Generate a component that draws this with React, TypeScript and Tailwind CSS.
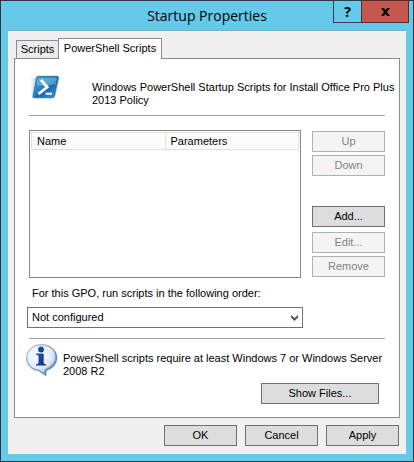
import type { ReactNode } from "react";

const buttonBase =
  "h-[21px] border border-[#707070] bg-[#dddddd] text-center text-black disabled:border-[#adb2b5] disabled:bg-[#f4f4f4] disabled:text-[#838383]";

function Button({ children, className = "w-[73px]", disabled = false }: { children: ReactNode; className?: string; disabled?: boolean }) {
  return (
    <button type="button" disabled={disabled} className={`${buttonBase} ${className}`}>
      {children}
    </button>
  );
}

function PowerShellIcon() {
  return (
    <svg width="32" height="26" viewBox="0 0 32 26" aria-hidden="true" className="shrink-0">
      <defs>
        <linearGradient id="ps" x1="0" y1="0" x2="1" y2="1">
          <stop offset="0" stopColor="#3f9bc6" />
          <stop offset="0.45" stopColor="#2a83bb" />
          <stop offset="0.55" stopColor="#1d62ab" />
          <stop offset="1" stopColor="#3aa0d4" />
        </linearGradient>
        <linearGradient id="trail" x1="0" x2="1">
          <stop offset="0" stopColor="#9ccbe6" stopOpacity="0" />
          <stop offset="1" stopColor="#7fb4d8" />
        </linearGradient>
      </defs>
      <path d="M1 4h8L7 21H2z" fill="url(#trail)" opacity="0.8" />
      <path d="M8.500 1.500H28.500Q31 1.500 30.300 4L26.300 22.500Q25.800 24.600 23.500 24.600H5Q2.600 24.600 3.100 22L6.600 3.600Q7 1.500 8.500 1.500Z" fill="#b5d2e6" />
      <path d="M9 2.500H28Q29.700 2.500 29.300 4L25.300 22Q24.800 23.600 23.300 23.600H5.400Q3.800 23.600 4.200 22L7.600 4Q8 2.500 9 2.500Z" fill="url(#ps)" stroke="#25729f" strokeWidth="0.8" />
      <path d="M9 4H28L26.500 10Q17 13 7.500 11Z" fill="#8fd0e9" opacity="0.45" />
      <path d="M12 6L18.200 13L9.500 20" fill="none" stroke="#fff" strokeWidth="2.8" />
      <path d="M16.500 19.700H23" stroke="#fff" strokeWidth="2" />
    </svg>
  );
}

function InfoIcon() {
  return (
    <svg width="32" height="33" viewBox="0 0 32 33" aria-hidden="true" className="shrink-0">
      <defs>
        <radialGradient id="bubble" cx="0.38" cy="0.3" r="0.75">
          <stop offset="0" stopColor="#ffffff" />
          <stop offset="0.6" stopColor="#e2edf9" />
          <stop offset="1" stopColor="#9dbde5" />
        </radialGradient>
        <linearGradient id="rim" x1="0" y1="0" x2="1" y2="1">
          <stop offset="0" stopColor="#c3ced9" />
          <stop offset="0.5" stopColor="#8fa6c2" />
          <stop offset="1" stopColor="#3d5f92" />
        </linearGradient>
        <linearGradient id="letter" x1="0" y1="0" x2="1" y2="1">
          <stop offset="0" stopColor="#2459c9" />
          <stop offset="1" stopColor="#082c80" />
        </linearGradient>
      </defs>
      <path d="M15.500 0.800C23.800 0.800 30.600 6.500 30.600 13.800C30.600 19.600 26.200 24.500 20 26.200L19.500 31L12.500 26.200C5.400 25.500 0.700 20.300 0.700 13.800C0.700 6.500 7.300 0.800 15.500 0.800Z" fill="url(#bubble)" stroke="url(#rim)" strokeWidth="1.4" />
      <path d="M29 8Q32 18 23 23.500Q20 25 19 26L18.500 29" fill="none" stroke="#6088bd" strokeWidth="1.4" opacity="0.6" />
      <circle cx="15" cy="5.500" r="2.900" fill="url(#letter)" />
      <path d="M10 9.500H17.700V19Q17.700 20.300 20 20.300V21.500H10V20.300Q12.500 20.300 12.500 19V12.500Q12.500 10.700 10 10.700Z" fill="url(#letter)" />
    </svg>
  );
}

export default function App() {
  return (
    <div className="flex min-h-screen flex-col border border-[#30343b] bg-[#65c9ea] font-['Liberation_Sans',Arial,sans-serif] text-[11px] leading-[13px] text-black">
      <header className="relative flex h-[29px] items-center justify-center">
        <h1 className="font-['Open_Sans',sans-serif] text-[14px] leading-5">Startup Properties</h1>
        <div className="absolute -top-px right-1 flex">
          <button type="button" aria-label="Help" className="flex h-[23px] w-[29px] items-center justify-center border border-[#30404a] font-['Open_Sans',sans-serif] text-[14px] font-bold">
            ?
          </button>
          <button type="button" aria-label="Close" className="-ml-px flex h-[23px] w-[48px] items-center justify-center border border-[#552c2c] bg-[#c4584f]">
            <svg width="9" height="8" viewBox="0 0 9 8" aria-hidden="true">
              <path d="M0 0H3L4.500 2.200L6 0H9L6 4L9 8H6L4.500 5.800L3 8H0L3 4Z" fill="#000" />
            </svg>
          </button>
        </div>
      </header>

      <main className="mx-[7px] mb-[7px] flex grow flex-col border-t border-[#78afc4] bg-[#f0f0f0] px-[6px] pt-[7px] pb-2">
        <div role="tablist" className="relative z-10 flex items-end pl-[2px]">
          <button type="button" role="tab" aria-selected="false" className="h-[18px] w-[42px] border border-r-0 border-b-0 border-[#898c95] bg-[#ebebeb]">
            Scripts
          </button>
          <button type="button" role="tab" aria-selected="true" className="-mb-px h-[21px] w-[104px] border border-b-0 border-[#898c95] bg-white pb-[2px]">
            PowerShell Scripts
          </button>
        </div>

        <section role="tabpanel" className="grow border border-[#898c95] bg-white px-[14px] pb-[13px]">
          <div className="-mr-[10px] flex h-14 items-start pt-[15px]">
            <PowerShellIcon />
            <p className="ml-[31px] pt-[7px]">Windows PowerShell Startup Scripts for Install Office Pro Plus 2013 Policy</p>
          </div>
          <hr className="border-[#a0a0a0]" />

          <div className="mt-[14px] flex gap-[11px]">
            <div className="h-[148px] grow border border-[#828790] p-px">
              <table className="w-full table-fixed border-collapse">
                <thead>
                  <tr className="h-[17px] bg-[#fcfcfc] text-left">
                    <th scope="col" className="border border-[#e0e0e0] px-[5px] py-0 font-normal">Name</th>
                    <th scope="col" className="border border-[#e0e0e0] px-[5px] py-0 font-normal">Parameters</th>
                  </tr>
                </thead>
              </table>
            </div>
            <div className="flex flex-col pt-px">
              <div className="flex flex-col gap-[3px]">
                <Button disabled>Up</Button>
                <Button disabled>Down</Button>
              </div>
              <div className="mt-[30px] flex flex-col">
                <Button>Add...</Button>
              </div>
              <div className="mt-[5px] flex flex-col gap-[3px]">
                <Button disabled>Edit...</Button>
                <Button disabled>Remove</Button>
              </div>
            </div>
          </div>

          <label htmlFor="order" className="mt-[9px] block pl-[3px]">
            For this GPO, run scripts in the following order:
          </label>
          <div className="relative mt-[7px] mr-[82px] -ml-[2px]">
            <select id="order" defaultValue="none" className="block h-[21px] w-full appearance-none rounded-none border border-[#707070] bg-white pl-[4px] leading-[13px]">
              <option value="none">Not configured</option>
            </select>
            <svg width="7" height="6" viewBox="0 0 7 6" aria-hidden="true" className="pointer-events-none absolute top-2 right-[5px]">
              <path d="M0 0L3.500 3L7 0V2.500L3.500 6L0 2.500Z" fill="#555" />
            </svg>
          </div>
          <hr className="mt-[10px] border-[#a0a0a0]" />

          <div className="-ml-[3px] mt-[5px] flex h-[39px] items-start gap-[5px]">
            <InfoIcon />
            <p className="pt-2">PowerShell scripts require at least Windows 7 or Windows Server 2008 R2</p>
          </div>
          <div className="flex justify-end pr-[6px]">
            <Button className="w-[118px]">Show Files...</Button>
          </div>
        </section>

        <footer className="mt-[7px] flex justify-end gap-2 pr-px">
          <Button>OK</Button>
          <Button>Cancel</Button>
          <Button>Apply</Button>
        </footer>
      </main>
    </div>
  );
}
